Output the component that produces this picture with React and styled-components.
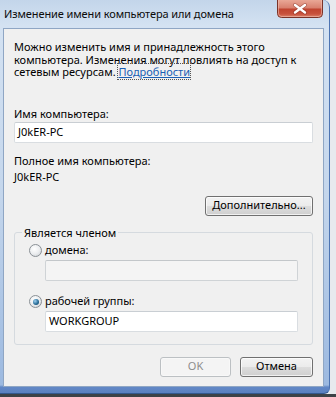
import React from 'react';
import styled, { createGlobalStyle } from 'styled-components';

const GlobalStyle = createGlobalStyle`
  html, body { margin: 0; padding: 0; }
  body {
    width: 336px;
    height: 397px;
    overflow: hidden;
    background: linear-gradient(#e7eaee 0, #e7eaee 394px, #3d4247 394px);
    font-family: "Noto Sans", "DejaVu Sans", sans-serif;
    color: #000;
  }
`;

const Window = styled.div`
  width: 330px;
  height: 394px;
  box-sizing: border-box;
  display: flex;
  flex-direction: column;
  padding: 0 5px 6px 3px;
  background: linear-gradient(#c3d5ea 0, #d4e2f2 26px, #c4d6ec 50%, #9cb9e0 calc(100% - 8px), #6288c6 calc(100% - 6px), #5a80c0 100%);
  border-right: 1px solid #4d74b2;
  border-bottom: 1px solid #34598f;
  border-radius: 0 7px 6px 0;
`;

const TitleBar = styled.div`
  height: 28px;
  display: flex;
  justify-content: space-between;
  align-items: flex-start;
  padding-right: 1px;
  flex-shrink: 0;
`;

const Title = styled.div`
  font-size: 11px;
  letter-spacing: -0.1px;
  line-height: 14px;
  margin-top: 7px;
  padding-left: 1px;
  color: #0c0c0c;
  white-space: nowrap;
`;

const CloseSvg = styled.svg`
  display: block;
  flex-shrink: 0;
`;

const Content = styled.div`
  flex: 1;
  background: #f0f0f0;
  border: 1px solid #8fa6c4;
  padding: 12px 10px 0 10px;
  font-size: 11px;
  line-height: 12.5px;
  display: flex;
  flex-direction: column;
`;

const Intro = styled.p`
  margin: 0 0 28px;
`;

const Link = styled.span`
  color: #1a5fb4;
  text-decoration: underline;
  outline: 1px dotted #555;
`;

const Label = styled.div`
  margin-top: ${p => p.$top || 0}px;
  line-height: 13px;
`;

const Input = styled.div`
  height: 21px;
  box-sizing: border-box;
  margin-top: ${p => p.$top || 0}px;
  margin-left: ${p => p.$indent || 0}px;
  width: ${p => (p.$indent ? '253px' : 'auto')};
  border: 1px solid ${p => (p.$disabled ? '#cfd3d6' : '#d9dde1')};
  border-top-color: ${p => (p.$disabled ? '#c3c7ca' : '#c9ced3')};
  border-radius: 2px;
  background: ${p => (p.$disabled ? '#f4f4f4' : '#fff')};
  padding: 0 3px;
  display: flex;
  align-items: center;
`;

const Row = styled.div`
  display: flex;
  justify-content: flex-end;
  gap: 9px;
  margin-top: ${p => p.$top || 0}px;
`;

const Button = styled.div`
  width: ${p => p.$w}px;
  height: 20px;
  box-sizing: border-box;
  display: flex;
  align-items: center;
  justify-content: center;
  border: 1px solid ${p => (p.$disabled ? '#bcc0c3' : '#707070')};
  border-radius: 3px;
  color: ${p => (p.$disabled ? '#8d8d8d' : '#000')};
  background: ${p =>
    p.$disabled
      ? '#f4f4f4'
      : 'linear-gradient(#f3f3f3 0, #ebebeb 50%, #dddddd 51%, #cfcfcf 100%)'};
  box-shadow: inset 0 0 0 1px ${p => (p.$disabled ? '#f8f8f8' : 'rgba(255,255,255,0.7)')};
`;

const Group = styled.fieldset`
  margin: 10px 0 0;
  padding: 0 14px 12px 14px;
  border: 1px solid #d5dadf;
  border-radius: 3px;
`;

const Legend = styled.legend`
  margin-left: -7px;
  padding: 0 2px;
  line-height: 13px;
`;

const RadioRow = styled.div`
  display: flex;
  align-items: center;
  gap: 3px;
  height: 14px;
  margin-top: ${p => p.$top || 0}px;
`;

const RadioDot = styled.span`
  width: 11px;
  height: 11px;
  border-radius: 50%;
  border: 1px solid #8a9096;
  background: radial-gradient(circle at 40% 35%, #ffffff 0, #eceef0 50%, #c9cdd1 100%);
  display: flex;
  align-items: center;
  justify-content: center;
  flex-shrink: 0;
  &::after {
    content: '';
    width: 6px;
    height: 6px;
    border-radius: 50%;
    display: ${p => (p.$checked ? 'block' : 'none')};
    background: radial-gradient(circle at 35% 35%, #9fd0f0 0, #2a6f9a 55%, #0d3a58 100%);
  }
`;

function CloseIcon() {
  return (
    <CloseSvg width="46" height="18" viewBox="0 0 46 18">
      <defs>
        <linearGradient id="closeRed" x1="0" y1="0" x2="0" y2="1">
          <stop offset="0" stopColor="#e9a796" />
          <stop offset="0.45" stopColor="#d8806e" />
          <stop offset="0.52" stopColor="#c04430" />
          <stop offset="0.8" stopColor="#c8523d" />
          <stop offset="1" stopColor="#df8a72" />
        </linearGradient>
      </defs>
      <path d="M0.5 0 V13.5 Q0.5 17.5 4.5 17.5 H41.5 Q45.5 17.5 45.5 13.5 V0" fill="url(#closeRed)" stroke="#7a3328" />
      <path d="M1.5 0 V13.3 Q1.5 16.5 4.7 16.5 H41.3 Q44.5 16.5 44.5 13.3 V0" fill="none" stroke="#f3c2b6" strokeOpacity="0.55" />
      <path d="M18 5 L28 12.5 M28 5 L18 12.5" stroke="#6a1e14" strokeWidth="4" strokeLinecap="round" opacity="0.4" />
      <path d="M18 5 L28 12.5 M28 5 L18 12.5" stroke="#fff" strokeWidth="2.4" strokeLinecap="round" />
    </CloseSvg>
  );
}

export default function App() {
  return (
    <>
      <GlobalStyle />
      <Window>
        <TitleBar>
          <Title>Изменение имени компьютера или домена</Title>
          <CloseIcon />
        </TitleBar>
        <Content>
          <Intro>
            Можно изменить имя и принадлежность этого компьютера. Изменения могут повлиять на доступ к
            сетевым ресурсам. <Link>Подробности</Link>
          </Intro>
          <Label>Имя компьютера:</Label>
          <Input $top={2}>J0kER-PC</Input>
          <Label $top={11}>Полное имя компьютера:</Label>
          <Label $top={3}>J0kER-PC</Label>
          <Row $top={13}>
            <Button $w={108}>Дополнительно...</Button>
          </Row>
          <Group>
            <Legend>Является членом</Legend>
            <RadioRow $top={5}>
              <RadioDot />
              <span>домена:</span>
            </RadioRow>
            <Input $top={2} $indent={16} $disabled />
            <RadioRow $top={14}>
              <RadioDot $checked />
              <span>рабочей группы:</span>
            </RadioRow>
            <Input $top={2} $indent={16}>WORKGROUP</Input>
          </Group>
          <Row $top={12}>
            <Button $w={71} $disabled>OK</Button>
            <Button $w={73}>Отмена</Button>
          </Row>
        </Content>
      </Window>
    </>
  );
}
